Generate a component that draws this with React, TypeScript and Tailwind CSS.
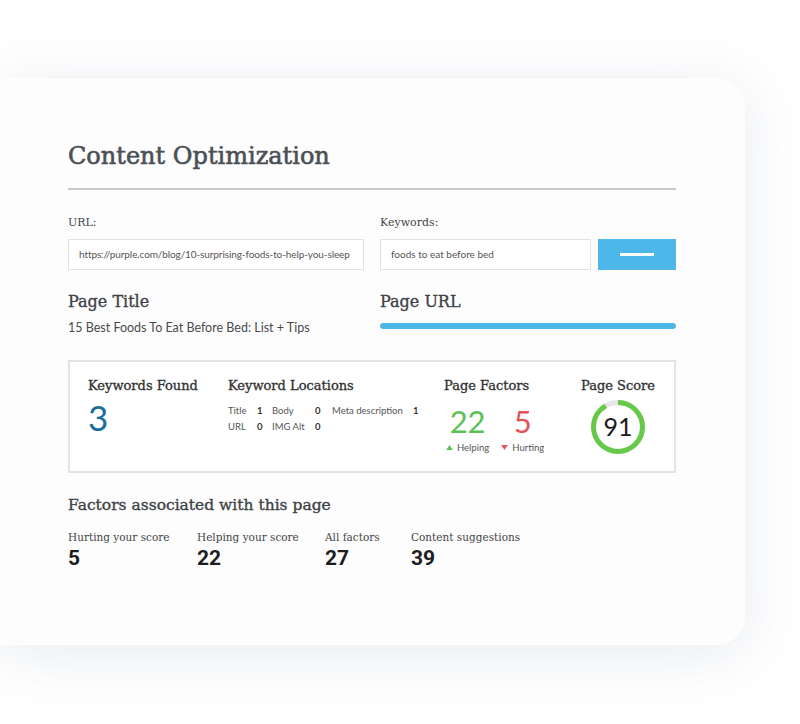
import React from "react";

const slab = "font-['DejaVu_Serif',serif] [-webkit-text-stroke:0.35px_currentColor]";
const sans = "font-['Lato','Noto_Sans',sans-serif]";

function ScoreRing({ value }: { value: number }) {
  const r = 24.5;
  const c = 2 * Math.PI * r;
  return (
    <div className="relative size-[56px]">
      <svg viewBox="0 0 56 56" className="size-[56px] -rotate-90">
        <circle cx="28" cy="28" r={r} fill="none" stroke="#e6e6e6" strokeWidth="5" />
        <circle
          cx="28"
          cy="28"
          r={r}
          fill="none"
          stroke="#66c94a"
          strokeWidth="5"
          strokeDasharray={`${(c * value) / 100} ${c}`}
        />
      </svg>
      <span className={`${sans} absolute inset-0 flex items-center justify-center text-[25px] text-[#1b1b1b]`}>
        {value}
      </span>
    </div>
  );
}

function Tri({ up, color }: { up: boolean; color: string }) {
  return (
    <svg viewBox="0 0 8 6" className="h-[5px] w-[7px]">
      <path d={up ? "M4 0 L8 6 L0 6 Z" : "M0 0 L8 0 L4 6 Z"} fill={color} />
    </svg>
  );
}

function Stat({ label, value, w }: { label: string; value: number; w: string }) {
  return (
    <div className={`flex flex-col ${w}`}>
      <span className="font-['DejaVu_Serif',serif] text-[10.5px] text-[#444]">{label}</span>
      <span className="mt-[3px] font-['Roboto',sans-serif] text-[21px] font-bold leading-none text-[#1d1d1d]">
        {value}
      </span>
    </div>
  );
}

export default function App() {
  return (
    <div className="min-h-[724px] w-[800px] bg-white pt-[78px]">
      <div className="h-[567px] w-[745px] rounded-r-[28px] bg-[#fdfdfe] pl-[68px] pt-[66px] shadow-[0_8px_60px_rgba(70,90,130,0.13)]">
        <div className="w-[608px]">
          <h1 className="font-['DejaVu_Serif',serif] text-[24px] leading-none text-[#4b5055] [-webkit-text-stroke:0.6px_#4b5055]">
            Content Optimization
          </h1>
          <div className="mt-[20px] h-[2px] bg-[#c9c9c9]" />

          <div className="mt-[25px] flex gap-[16px]">
            <div className="flex w-[296px] flex-col">
              <span className="font-['DejaVu_Serif',serif] text-[11px] text-[#444]">URL:</span>
              <div
                className={`${sans} mt-[7px] flex h-[31px] items-center whitespace-nowrap border border-[#e2e2e2] bg-white px-[10px] text-[10px] tracking-[-0.1px] text-[#555]`}
              >
                https://purple.com/blog/10-surprising-foods-to-help-you-sleep
              </div>
            </div>
            <div className="flex flex-1 flex-col">
              <span className="font-['DejaVu_Serif',serif] text-[11px] text-[#444]">Keywords:</span>
              <div className="mt-[7px] flex gap-[7px]">
                <div
                  className={`${sans} flex h-[31px] w-[211px] items-center border border-[#e2e2e2] bg-white px-[10px] text-[10px] text-[#555]`}
                >
                  foods to eat before bed
                </div>
                <button className="flex h-[31px] flex-1 items-center justify-center bg-[#4cb7e8]">
                  <span className="h-[3px] w-[34px] bg-white" />
                </button>
              </div>
            </div>
          </div>

          <div className="mt-[24px] flex gap-[16px]">
            <div className="flex w-[296px] flex-col">
              <span className={`${slab} text-[16px] leading-none text-[#3e4246]`}>Page Title</span>
              <span className={`${sans} mt-[9px] text-[12.5px] text-[#4a4a4a]`}>
                15 Best Foods To Eat Before Bed: List + Tips
              </span>
            </div>
            <div className="flex flex-1 flex-col">
              <span className={`${slab} text-[16px] leading-none text-[#3e4246]`}>Page URL</span>
              <div className="mt-[13px] h-[6px] rounded-full bg-[#4db6e6]" />
            </div>
          </div>

          <div className="mt-[23px] flex h-[113px] border-2 border-[#e3e3e3] bg-white pl-[18px] pt-[14px]">
            <div className="flex w-[140px] flex-col">
              <span className={`${slab} text-[13px] text-[#333]`}>Keywords Found</span>
              <span className={`${sans} mt-[4px] text-[35px] leading-none text-[#1a6e9b]`}>3</span>
            </div>
            <div className="flex w-[216px] flex-col">
              <span className={`${slab} text-[13px] text-[#333]`}>Keyword Locations</span>
              <div
                className={`${sans} mt-[8px] grid grid-cols-[29px_15px_43px_17px_81px_auto] gap-y-[2px] text-[9.5px] text-[#555]`}
              >
                <span>Title</span>
                <span className="font-bold text-[#333]">1</span>
                <span>Body</span>
                <span className="font-bold text-[#333]">0</span>
                <span>Meta description</span>
                <span className="font-bold text-[#333]">1</span>
                <span>URL</span>
                <span className="font-bold text-[#333]">0</span>
                <span>IMG Alt</span>
                <span className="font-bold text-[#333]">0</span>
              </div>
            </div>
            <div className="flex w-[137px] flex-col">
              <span className={`${slab} text-[13px] text-[#333]`}>Page Factors</span>
              <div className="mt-[10px] flex gap-[12px] pl-[2px]">
                <div className="flex flex-col items-center">
                  <span className={`${sans} text-[31px] leading-none text-[#5bc157]`}>22</span>
                  <span className={`${sans} mt-[4px] flex items-center gap-[4px] text-[9.5px] text-[#555]`}>
                    <Tri up color="#5bc157" />
                    Helping
                  </span>
                </div>
                <div className="flex flex-col items-center">
                  <span className={`${sans} text-[31px] leading-none text-[#e5535c]`}>5</span>
                  <span className={`${sans} mt-[4px] flex items-center gap-[4px] text-[9.5px] text-[#555]`}>
                    <Tri up={false} color="#e5535c" />
                    Hurting
                  </span>
                </div>
              </div>
            </div>
            <div className="flex flex-col items-center">
              <span className={`${slab} text-[13px] text-[#333]`}>Page Score</span>
              <div className="mt-[3px]">
                <ScoreRing value={91} />
              </div>
            </div>
          </div>

          <h2 className={`${slab} mt-[21px] text-[15.5px] text-[#3e4246]`}>Factors associated with this page</h2>
          <div className="mt-[12px] flex">
            <Stat label="Hurting your score" value={5} w="w-[129px]" />
            <Stat label="Helping your score" value={22} w="w-[128px]" />
            <Stat label="All factors" value={27} w="w-[86px]" />
            <Stat label="Content suggestions" value={39} w="w-[150px]" />
          </div>
        </div>
      </div>
    </div>
  );
}
